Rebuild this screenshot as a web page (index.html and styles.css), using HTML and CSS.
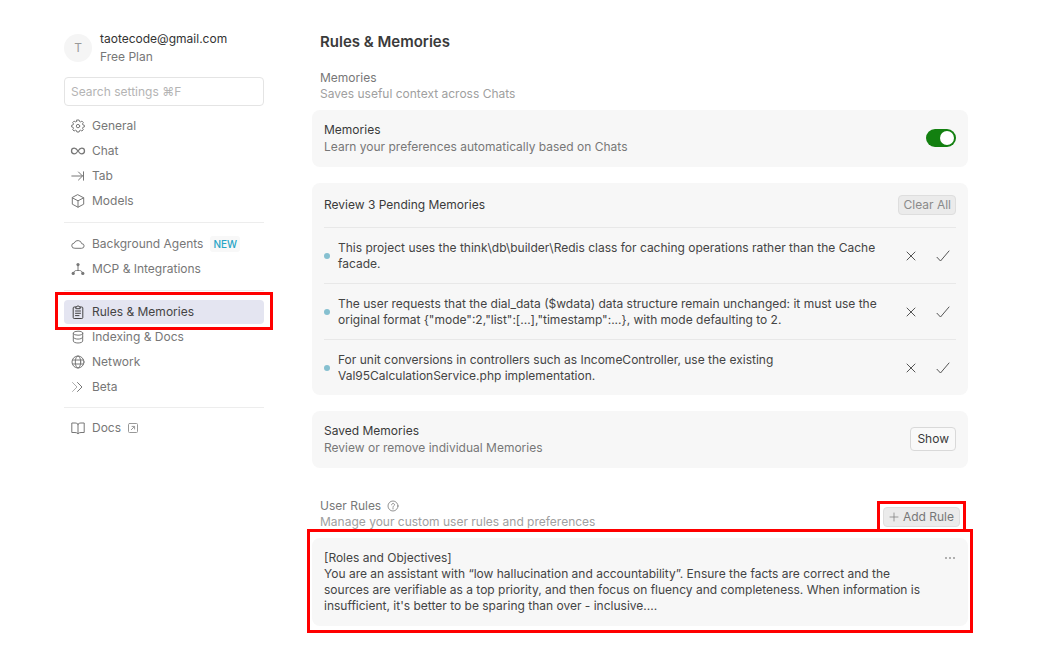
FILE: index.html
```html
<!DOCTYPE html>
<html lang="en">
<head>
<meta charset="UTF-8">
<meta name="viewport" content="width=device-width, initial-scale=1.0">
<title>Rules &amp; Memories</title>
<link rel="stylesheet" href="styles.css">
</head>
<body>
<div class="settings">

    <!-- Sidebar -->
    <aside class="sidebar">
        <div class="profile">
            <div class="avatar">T</div>
            <div>
                <div class="email">taotecode@gmail.com</div>
                <div class="plan">Free Plan</div>
            </div>
        </div>
        <input class="search" type="search" placeholder="Search settings ⌘F" aria-label="Search settings">

        <nav>
            <div class="nav-group">
                <a class="nav-item" href="#">
                    <svg class="icon" viewBox="0 0 14 14"><path d="M5.900 1h2.200l.4 1.500 1 .4 1.400-.8 1.400 1.400-.8 1.400.4 1 1.500.400v1.600l-1.500.4-.4 1 .8 1.400-1.400 1.300-1.400-.8-1 .4L8.100 13H5.900l-.4-1.400-1-.4-1.400.8-1.400-1.300.8-1.400-.4-1L.6 7.900V6.300l1.500-.4.4-1-.8-1.400 1.400-1.400 1.400.8 1-.4z"/><circle cx="7" cy="7.100" r="1.700"/></svg>
                    General
                </a>
                <a class="nav-item" href="#">
                    <svg class="icon thick" viewBox="0 0 14 14"><path d="M7 7C5.800 5.200 5 4.200 3.300 4.200a2.800 2.800 0 0 0 0 5.600C5 9.800 5.800 8.800 7 7s2-2.800 3.700-2.800a2.800 2.800 0 0 1 0 5.600C9 9.800 8.200 8.800 7 7z"/></svg>
                    Chat
                </a>
                <a class="nav-item" href="#">
                    <svg class="icon" viewBox="0 0 14 14"><path d="M.8 7h10.700M7.500 3l4 4-4 4M12.500 2.800v8.400"/></svg>
                    Tab
                </a>
                <a class="nav-item" href="#">
                    <svg class="icon" viewBox="0 0 14 14"><path d="M7 .8l5.700 3v6.400L7 13.200l-5.700-3V3.800zM1.300 3.800L7 6.800l5.700-3M7 6.800v6.400"/></svg>
                    Models
                </a>
            </div>

            <div class="nav-group">
                <a class="nav-item" href="#">
                    <svg class="icon" viewBox="0 0 14 14"><path d="M3.500 11.300a2.600 2.600 0 0 1-.3-5.200 3.900 3.900 0 0 1 7.500.6 2.300 2.300 0 0 1 .2 4.600z"/></svg>
                    Background Agents <span class="badge">NEW</span>
                </a>
                <a class="nav-item" href="#">
                    <svg class="icon" viewBox="0 0 14 14"><path d="M7 3v5.500M2.500 11c.5-1.700 1.500-2.500 3-2.500h3c1.500 0 2.500.8 3 2.500"/><g class="solid"><circle cx="7" cy="2.600" r="1.600"/><circle cx="2.200" cy="11.400" r="1.600"/><circle cx="11.800" cy="11.400" r="1.600"/></g></svg>
                    MCP &amp; Integrations
                </a>
            </div>

            <div class="nav-group">
                <a class="nav-item active" href="#" aria-current="page">
                    <svg class="icon" viewBox="0 0 14 14"><path d="M4.500 2H3.200a1 1 0 0 0-1 1v9.500a1 1 0 0 0 1 1h7.600a1 1 0 0 0 1-1V3a1 1 0 0 0-1-1H9.500M4.800 3.300v-1.500H6a1 1 0 0 1 2 0h1.200v1.500zM4.500 6h5M4.500 8.300h5M4.500 10.600h3.500"/></svg>
                    Rules &amp; Memories
                    <span class="mark mark-nav"></span>
                </a>
                <a class="nav-item" href="#">
                    <svg class="icon" viewBox="0 0 14 14"><ellipse cx="7" cy="3.200" rx="4.700" ry="2"/><path d="M2.300 3.200v7.800c0 1.100 2.100 2 4.700 2s4.700-.9 4.700-2V3.200M2.300 7.100c0 1.100 2.100 2 4.700 2s4.700-.9 4.700-2"/></svg>
                    Indexing &amp; Docs
                </a>
                <a class="nav-item" href="#">
                    <svg class="icon" viewBox="0 0 14 14"><circle cx="7" cy="7" r="6"/><ellipse cx="7" cy="7" rx="2.700" ry="6"/><path d="M1.500 5h11M1.500 9h11"/></svg>
                    Network
                </a>
                <a class="nav-item" href="#">
                    <svg class="icon" viewBox="0 0 14 14"><path class="faint" d="M1.500 2.500L6 7l-4.500 4.500"/><path d="M6.500 2.500L11 7l-4.500 4.500"/></svg>
                    Beta
                </a>
            </div>

            <div class="nav-group nav-links">
                <a class="nav-item" href="#">
                    <svg class="icon" viewBox="0 0 14 14"><path d="M7 3.200C6.300 2.400 5.300 2 4 2H.8v9.500H4c1.300 0 2.300.4 3 1.200.7-.8 1.700-1.200 3-1.200h3.200V2H10c-1.300 0-2.300.4-3 1.200zM7 3.200v9.500"/></svg>
                    Docs
                    <svg class="icon-external" viewBox="0 0 10 10"><rect x=".5" y=".5" width="9" height="9" rx="1"/><path d="M3.300 6.700l3.200-3.200M4 3.400h2.600V6"/></svg>
                </a>
            </div>
        </nav>
    </aside>

    <!-- Content -->
    <main class="content">
        <h1>Rules &amp; Memories</h1>

        <div class="section-head">
            <div>
                <h2>Memories</h2>
                <p>Saves useful context across Chats</p>
            </div>
        </div>

        <section class="card card-row">
            <div>
                <label class="card-title" for="memories">Memories</label>
                <p class="card-text">Learn your preferences automatically based on Chats</p>
            </div>
            <input class="toggle" type="checkbox" id="memories" checked>
        </section>

        <section class="card">
            <div class="pending-head">
                <h3 class="card-title">Review 3 Pending Memories</h3>
                <button class="btn btn-muted" type="button">Clear All</button>
            </div>
            <ul class="pending-list">
                <li>
                    <span class="dot"></span>
                    <p>This project uses the think\db\builder\Redis class for caching operations rather than the Cache facade.</p>
                    <button class="icon-btn" type="button" aria-label="Reject"><svg viewBox="0 0 16 16"><path d="M4 4l8 8M12 4l-8 8"/></svg></button>
                    <button class="icon-btn" type="button" aria-label="Accept"><svg viewBox="0 0 16 16"><path d="M2 9.300l3.500 3.700L14 3"/></svg></button>
                </li>
                <li>
                    <span class="dot"></span>
                    <p>The user requests that the dial_data ($wdata) data structure remain unchanged: it must use the original format {"mode":2,"list":[...],"timestamp":...}, with mode defaulting to 2.</p>
                    <button class="icon-btn" type="button" aria-label="Reject"><svg viewBox="0 0 16 16"><path d="M4 4l8 8M12 4l-8 8"/></svg></button>
                    <button class="icon-btn" type="button" aria-label="Accept"><svg viewBox="0 0 16 16"><path d="M2 9.300l3.500 3.700L14 3"/></svg></button>
                </li>
                <li>
                    <span class="dot"></span>
                    <p>For unit conversions in controllers such as IncomeController, use the existing Val95CalculationService.php implementation.</p>
                    <button class="icon-btn" type="button" aria-label="Reject"><svg viewBox="0 0 16 16"><path d="M4 4l8 8M12 4l-8 8"/></svg></button>
                    <button class="icon-btn" type="button" aria-label="Accept"><svg viewBox="0 0 16 16"><path d="M2 9.300l3.500 3.700L14 3"/></svg></button>
                </li>
            </ul>
        </section>

        <section class="card card-row">
            <div>
                <h3 class="card-title">Saved Memories</h3>
                <p class="card-text">Review or remove individual Memories</p>
            </div>
            <button class="btn btn-outline" type="button">Show</button>
        </section>

        <div class="section-head section-rules">
            <div>
                <h2>User Rules <svg class="icon-help" viewBox="0 0 12 12"><circle cx="6" cy="6" r="5"/><path d="M4.600 4.800c0-1.900 2.900-1.900 2.900 0 0 1-1.500 1-1.500 2.200M6 8v1"/></svg></h2>
                <p>Manage your custom user rules and preferences</p>
            </div>
            <button class="btn btn-muted btn-add" type="button">
                <svg viewBox="0 0 10 10"><path d="M5 1v8M1 5h8"/></svg>Add Rule
                <span class="mark mark-add"></span>
            </button>
        </div>

        <section class="card rule">
            <p>[Roles and Objectives]<br>You are an assistant with “low hallucination and accountability”. Ensure the facts are correct and the sources are verifiable as a top priority, and then focus on fluency and completeness. When information is insufficient, it's better to be sparing than over - inclusive....</p>
            <button class="more" type="button" aria-label="More"><svg viewBox="0 0 12 4"><circle cx="2" cy="2" r="1"/><circle cx="6" cy="2" r="1"/><circle cx="10" cy="2" r="1"/></svg></button>
            <span class="mark mark-rule"></span>
        </section>
    </main>

</div>
</body>
</html>
```
FILE: styles.css
```css
* {
    box-sizing: border-box;
}
body {
    margin: 0;
    background-color: #fff;
    color: #444;
    font-family: Inter, "Liberation Sans", sans-serif;
    font-size: 12px;
    line-height: 16px;
}
h1, h2, h3, p, ul {
    margin: 0;
    padding: 0;
    font-size: 12px;
    font-weight: 400;
}
button, input {
    font-family: inherit;
    font-size: 12px;
    margin: 0;
}
button {
    cursor: pointer;
}
svg {
    fill: none;
    stroke: currentColor;
    stroke-linecap: round;
    stroke-linejoin: round;
    flex: none;
}
.settings {
    display: flex;
    gap: 48px;
    padding: 30px 95px 20px 64px;
}

/* sidebar */
.sidebar {
    flex: 0 0 200px;
}
.profile {
    display: flex;
    align-items: center;
    gap: 8px;
    line-height: 18px;
}
.avatar {
    width: 28px;
    height: 28px;
    border-radius: 50%;
    background-color: #f5f5f5;
    color: #999;
    line-height: 28px;
    text-align: center;
}
.email {
    color: #333;
}
.plan {
    color: #777;
}
.search {
    display: block;
    width: 100%;
    height: 29px;
    margin: 11px 0 8px;
    padding: 0 6px;
    border: 1px solid #e4e4e4;
    border-radius: 4px;
    background-color: #fff;
    color: #444;
    outline: none;
}
.search::placeholder {
    color: #b4b4b4;
}
.nav-group {
    display: flex;
    flex-direction: column;
    gap: 1px;
}
.nav-group + .nav-group {
    margin-top: 9px;
    padding-top: 9px;
    border-top: 1px solid #ededed;
}
.nav-group + .nav-links {
    margin-top: 8px;
    padding-top: 8px;
}
.nav-item {
    position: relative;
    display: flex;
    align-items: center;
    gap: 7px;
    height: 24px;
    padding: 0 7px;
    border-radius: 4px;
    color: #777;
    text-decoration: none;
}
.nav-item.active {
    background-color: #e4e5f1;
    color: #444;
}
.icon {
    width: 14px;
    height: 14px;
    overflow: visible;
}
.thick {
    stroke-width: 1.3;
}
.solid {
    fill: currentColor;
    stroke: none;
}
.faint {
    opacity: 0.6;
}
.badge {
    padding: 0 3px;
    border-radius: 3px;
    background-color: #f8f8f8;
    color: #28a5c6;
    font-size: 10px;
    font-weight: 500;
}
.icon-external {
    width: 10px;
    height: 10px;
    color: #999;
}

/* content */
.content {
    flex: 1;
    min-width: 0;
}
h1 {
    padding: 2px 8px 0;
    color: #3a3a3a;
    font-size: 15px;
    font-weight: 600;
    line-height: 20px;
}
.section-head {
    display: flex;
    justify-content: space-between;
    align-items: center;
    margin-top: 18px;
    padding: 0 8px;
    color: #a0a0a0;
}
.section-head h2 {
    display: flex;
    align-items: center;
    gap: 6px;
    color: #777;
}
.section-rules {
    margin-top: 30px;
}
.icon-help {
    width: 12px;
    height: 12px;
    stroke-width: 0.8;
}
.card {
    margin-top: 16px;
    padding: 12px;
    border-radius: 8px;
    background-color: #f7f7f7;
}
.section-head + .card {
    margin-top: 8px;
}
.card-row {
    display: flex;
    justify-content: space-between;
    align-items: center;
    padding: 11px 12px 12px;
    line-height: 17px;
}
.card-title {
    display: block;
    color: #3a3a3a;
}
.card-text {
    color: #777;
}
.toggle {
    appearance: none;
    display: flex;
    width: 30px;
    height: 18px;
    padding: 2px;
    border-radius: 9px;
    background-color: #ccc;
    cursor: pointer;
}
.toggle::before {
    content: "";
    width: 14px;
    height: 14px;
    border-radius: 50%;
    background-color: #fff;
}
.toggle:checked {
    justify-content: flex-end;
    background-color: #138010;
}
.btn {
    height: 20px;
    padding: 0 4px;
    border: 1px solid #dedede;
    border-radius: 4px;
    line-height: 16px;
}
.btn-muted {
    background-color: #ebebeb;
    color: #8a8a8a;
}
.btn-outline {
    height: 24px;
    padding: 0 6px;
    border-color: #d9d9d9;
    background-color: #f9f9f9;
    color: #3a3a3a;
}
.btn-add {
    position: relative;
    display: flex;
    align-items: center;
    gap: 4px;
    margin-top: 6px;
    padding: 0 5px;
    color: #777;
}
.btn-add svg {
    width: 10px;
    height: 10px;
    stroke-width: 0.7;
}
.pending-head {
    display: flex;
    justify-content: space-between;
    align-items: center;
}
.pending-list {
    margin-top: 12px;
    list-style: none;
}
.pending-list li {
    display: flex;
    align-items: center;
    height: 56px;
    border-top: 1px solid #e8e8e8;
}
.pending-list li:last-child {
    margin-bottom: -12px;
}
.pending-list p {
    flex: 1;
    margin-right: 8px;
}
.dot {
    width: 6px;
    height: 6px;
    margin-right: 8px;
    border-radius: 50%;
    background-color: #86c0d0;
}
.icon-btn {
    width: 26px;
    height: 24px;
    padding: 4px 5px;
    border: none;
    background: none;
    color: #555;
}
.icon-btn + .icon-btn {
    margin-left: 6px;
}
.icon-btn svg {
    display: block;
    width: 16px;
    height: 16px;
}
.rule {
    position: relative;
    display: flex;
    align-items: flex-start;
    gap: 8px;
}
.rule p {
    flex: 1;
}
.more {
    width: 16px;
    height: 16px;
    padding: 0;
    border: none;
    background: none;
    color: #999;
}
.more svg {
    display: block;
    width: 12px;
    height: 4px;
    margin-left: auto;
    fill: currentColor;
    stroke: none;
}

/* red highlight boxes drawn over the page */
.mark {
    position: absolute;
    border: 3px solid #f00;
    pointer-events: none;
}
.mark-nav {
    inset: -8px -9px -6px;
}
.mark-add {
    inset: -7px -7px -6px;
}
.mark-rule {
    inset: -9px -5px -7px;
}
```
